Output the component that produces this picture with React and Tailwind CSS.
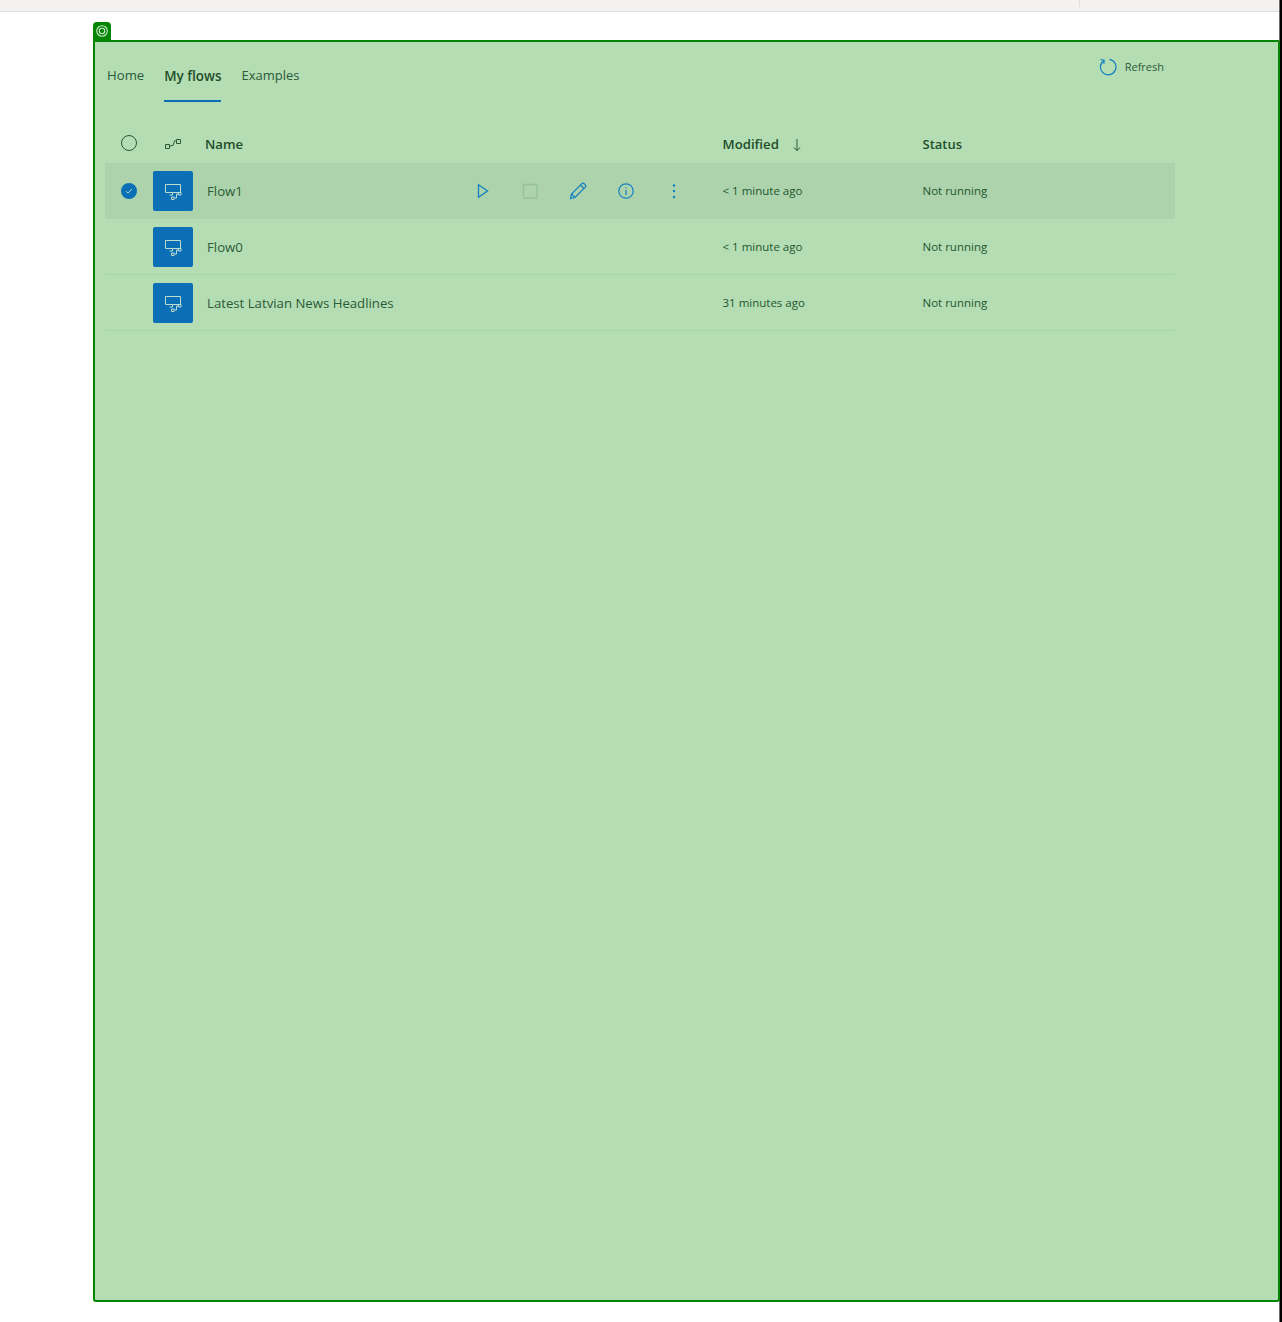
import React from "react";

const rows = [
    { name: "Flow1", modified: "< 1 minute ago", selected: true },
    { name: "Flow0", modified: "< 1 minute ago" },
    { name: "Latest Latvian News Headlines", modified: "31 minutes ago" },
];

function DesktopFlowIcon() {
    return (
        <svg width="18" height="18" viewBox="0 0 18 18" fill="none" stroke="#bcdcd2" strokeWidth="1">
            <path d="M1.500 2.500h15v8h-15z" />
            <path d="M8.500 10.500v2.500M5.500 13h3" />
            <path d="M7.500 15h2.500v2.500h-2.500zM14.500 10.500h2.500v2.500h-2.500z" />
            <path d="M10 16h2.500v-4h2" />
        </svg>
    );
}

function RowActions() {
    return (
        <div className="ml-auto mr-[24.5px] flex items-center">
            <span className="flex w-[48px] justify-center">
                <svg width="16" height="16" viewBox="0 0 16 16" fill="none" stroke="#1480c2" strokeWidth="1.300">
                    <path d="M4.500 1.800 13.500 8 4.500 14.200z" />
                </svg>
            </span>
            <span className="flex w-[48px] justify-center">
                <svg width="16" height="16" viewBox="0 0 16 16" fill="none" stroke="#94c29a" strokeWidth="1.300">
                    <path d="M1.500 1.500h13.500v13.500h-13.500z" />
                </svg>
            </span>
            <span className="flex w-[48px] justify-center">
                <svg width="18" height="18" viewBox="0 0 18 18" fill="none" stroke="#1480c2" strokeWidth="1.200">
                    <path d="M1.500 16.500l1-4.500L12.800 1.700a1.700 1.700 0 0 1 2.400 0l1.100 1.100a1.700 1.700 0 0 1 0 2.400L6 15.500z" />
                    <path d="M2.500 12l3.500 3.500M11.500 3l3.500 3.500" />
                </svg>
            </span>
            <span className="flex w-[48px] justify-center">
                <svg width="16" height="16" viewBox="0 0 16 16" fill="none" stroke="#1480c2" strokeWidth="1.200">
                    <circle cx="8" cy="8" r="7.200" />
                    <path d="M8 7v5M8 4.200v1.300" />
                </svg>
            </span>
            <span className="flex w-[48px] justify-center">
                <svg width="4" height="16" viewBox="0 0 4 16" fill="#1480c2">
                    <circle cx="2" cy="2.500" r="1.200" />
                    <circle cx="2" cy="8" r="1.200" />
                    <circle cx="2" cy="14" r="1.200" />
                </svg>
            </span>
        </div>
    );
}

function FlowRow({ row }) {
    return (
        <div
            className={`flex h-[56px] items-center border-b ${
                row.selected ? "border-transparent bg-[#acd3ab]" : "border-[#a8d2a9]"
            }`}
        >
            <div className="flex w-[48px] justify-center">
                {row.selected && (
                    <span className="flex h-[16px] w-[16px] items-center justify-center rounded-full bg-[#0a6fb5]">
                        <svg width="8" height="8" viewBox="0 0 8 8" fill="none" stroke="#bcdcd2" strokeWidth="1">
                            <path d="M1 4.200 3 6.200 7 1.800" />
                        </svg>
                    </span>
                )}
            </div>
            <div className="flex h-[40px] w-[40px] items-center justify-center rounded-[2px] bg-[#0a6fb5]">
                <DesktopFlowIcon />
            </div>
            <div className="flex w-[529.5px] items-center pl-[14px] pt-[2px]">
                <span className="text-[13.2px] text-[#2c5a37]">{row.name}</span>
                {row.selected && <RowActions />}
            </div>
            <div className="w-[200px] text-[11.5px] text-[#23552f]">{row.modified}</div>
            <div className="text-[11.5px] text-[#23552f]">Not running</div>
        </div>
    );
}

export default function App() {
    return (
        <div className="h-[1322px] w-[1282px] overflow-hidden border-r-2 border-black font-['Open_Sans','Noto_Sans',sans-serif]">
            <div className="h-full border-r border-[#6b6b6b] bg-white">
                <div className="flex h-[12px] justify-end border-b border-[#e1dfdd] bg-[#f3f2f1]">
                    <div className="mr-[199px] h-[7px] w-px bg-[#e1dfdd]" />
                </div>
                <div className="ml-[93px] mt-[10px] flex h-[18px] w-[18px] items-center justify-center rounded-t-[4px] bg-[#038403]">
                    <svg width="12" height="12" viewBox="0 0 12 12" fill="none" stroke="#cfe9cf" strokeWidth="1.100">
                        <circle cx="6" cy="6" r="5.300" />
                        <circle cx="6" cy="6" r="2.700" />
                    </svg>
                </div>
                <div className="ml-[93px] h-[1262px] w-[1187px] rounded-b-[3px] rounded-tr-[2px] border-2 border-[#038403] bg-[#b4ddb4]">
                    <div className="flex h-[62px] items-start">
                        <nav className="ml-[12px] flex gap-[20px] text-[13.2px] text-[#2c5a37]">
                            <a className="flex h-[60px] items-center border-b-2 border-transparent pt-[10px]">Home</a>
                            <a className="flex h-[60px] items-center border-b-2 border-[#0a6fb5] pt-[10px] text-[13.4px] font-semibold text-[#1f4f2a]">
                                My flows
                            </a>
                            <a className="flex h-[60px] items-center border-b-2 border-transparent pt-[10px] text-[13px]">Examples</a>
                        </nav>
                        <div className="ml-auto mr-[114px] mt-[16px] flex items-center gap-[8px]">
                            <svg width="18" height="18" viewBox="0 0 18 18" fill="none" stroke="#1480c2" strokeWidth="1.200">
                                <path d="M5 2.400A7.800 7.800 0 1 0 10.500 1.300" />
                                <path d="M1.500 1.500 5.200 2.300 4.800 6" />
                            </svg>
                            <span className="text-[11px] text-[#2c5a37]">Refresh</span>
                        </div>
                    </div>
                    <div className="ml-[10px] mt-[21px] w-[1070px]">
                        <div className="flex h-[38px] items-center text-[13.2px] font-semibold text-[#1f4f2a]">
                            <div className="flex w-[48px] justify-center">
                                <span className="h-[16px] w-[16px] -translate-y-[1px] rounded-full border border-[#2c5a37]" />
                            </div>
                            <div className="flex w-[40px] justify-center">
                                <svg width="18" height="12" viewBox="0 0 18 12" fill="none" stroke="#2c5a37" strokeWidth="1">
                                    <path d="M1.500 6.500h4v4h-4zM12.500 1.500h4v4h-4z" />
                                    <path d="M5.500 8 9 7.500 10.500 3l2-.5" />
                                </svg>
                            </div>
                            <div className="w-[529.5px] pl-[12px] pt-[2px]">Name</div>
                            <div className="flex w-[200px] items-center gap-[13px] pt-[2px]">
                                <span>Modified</span>
                                <svg width="10" height="14" viewBox="0 0 10 14" fill="none" stroke="#2c5a37" strokeWidth="1">
                                    <path d="M5 1v11.500M1.800 9.500 5 12.500 8.200 9.500" />
                                </svg>
                            </div>
                            <div className="pt-[2px] text-[13px]">Status</div>
                        </div>
                        {rows.map((row) => (
                            <FlowRow key={row.name} row={row} />
                        ))}
                    </div>
                </div>
            </div>
        </div>
    );
}
